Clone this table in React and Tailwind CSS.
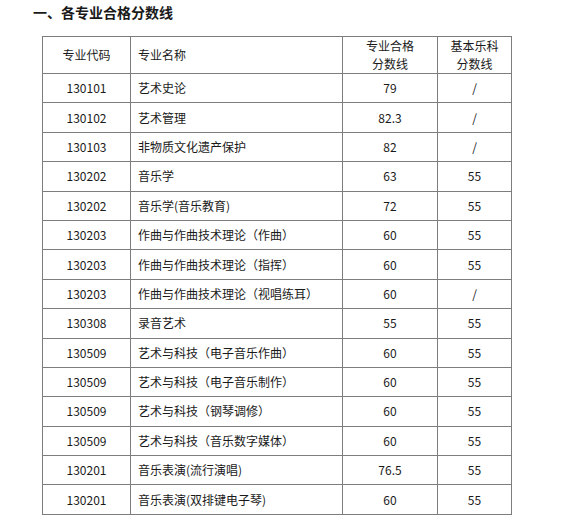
const rows = [
  ['130101', '艺术史论', '79', '/'],
  ['130102', '艺术管理', '82.3', '/'],
  ['130103', '非物质文化遗产保护', '82', '/'],
  ['130202', '音乐学', '63', '55'],
  ['130202', '音乐学(音乐教育)', '72', '55'],
  ['130203', '作曲与作曲技术理论（作曲）', '60', '55'],
  ['130203', '作曲与作曲技术理论（指挥）', '60', '55'],
  ['130203', '作曲与作曲技术理论（视唱练耳）', '60', '/'],
  ['130308', '录音艺术', '55', '55'],
  ['130509', '艺术与科技（电子音乐作曲）', '60', '55'],
  ['130509', '艺术与科技（电子音乐制作）', '60', '55'],
  ['130509', '艺术与科技（钢琴调修）', '60', '55'],
  ['130509', '艺术与科技（音乐数字媒体）', '60', '55'],
  ['130201', '音乐表演(流行演唱)', '76.5', '55'],
  ['130201', '音乐表演(双排键电子琴)', '60', '55'],
];

const cell = 'border border-[#7d7d7d] p-0';

export default function App() {
  return (
    <div className="bg-white w-[573px] h-[530px] text-[#1a1a1a]" style={{ fontFamily: '"Noto Sans CJK SC", "Liberation Sans", sans-serif' }}>
      <h1 className="pl-[33px] pt-[2px] text-[14px] leading-[20px] font-bold">一、各专业合格分数线</h1>
      <table className="ml-[42px] mt-[14px] border-collapse text-[12px] leading-[18px] table-fixed w-[469px]">
        <colgroup>
          <col className="w-[88px]" />
          <col className="w-[212px]" />
          <col className="w-[95px]" />
          <col className="w-[74px]" />
        </colgroup>
        <thead>
          <tr className="h-[36px]">
            <th className={`${cell} font-normal text-center`}>专业代码</th>
            <th className={`${cell} font-normal text-left pl-[7px]`}>专业名称</th>
            <th className={`${cell} font-normal text-center`}>专业合格<br />分数线</th>
            <th className={`${cell} font-normal text-center`}>基本乐科<br />分数线</th>
          </tr>
        </thead>
        <tbody>
          {rows.map((r, i) => (
            <tr key={i} className="h-[29.4px]">
              <td className={`${cell} text-center`}>{r[0]}</td>
              <td className={`${cell} text-left pl-[7px]`}>{r[1]}</td>
              <td className={`${cell} text-center`}>{r[2]}</td>
              <td className={`${cell} text-center`}>{r[3]}</td>
            </tr>
          ))}
        </tbody>
      </table>
    </div>
  );
}
